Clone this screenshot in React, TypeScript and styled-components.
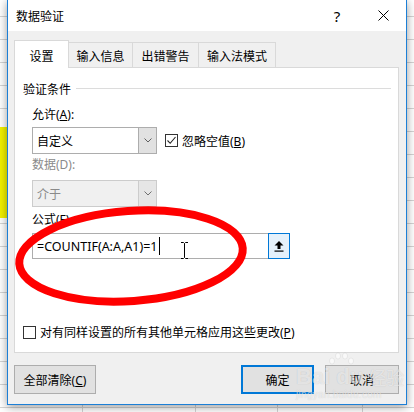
import React from "react";
import styled, { createGlobalStyle } from "styled-components";

const GlobalStyle = createGlobalStyle`
  html, body {
    margin: 0;
    padding: 0;
    background: #fff;
  }
  body {
    font-family: "Segoe UI", "Noto Sans", "Noto Sans CJK SC", sans-serif;
    font-size: 12px;
    color: #000;
  }
`;

// spreadsheet behind the dialog
const Sheet = styled.div`
  position: relative;
  width: 414px;
  height: 412px;
  overflow: hidden;
  background:
    linear-gradient(#f2f200, #f2f200) 0 127px / 7px 91px no-repeat,
    linear-gradient(#d4d4d4, #d4d4d4) 82px 0 / 1px 100% no-repeat,
    linear-gradient(#d4d4d4, #d4d4d4) 195px 0 / 1px 100% no-repeat,
    linear-gradient(#d4d4d4, #d4d4d4) 277px 0 / 1px 100% no-repeat,
    linear-gradient(#d4d4d4, #d4d4d4) 362px 0 / 1px 100% no-repeat,
    repeating-linear-gradient(180deg, transparent 0 16px, #d4d4d4 16px 17px, transparent 17px 23px),
    #fff;
`;

const Dialog = styled.div`
  box-sizing: border-box;
  margin-left: 7px;
  width: 400px;
  height: 405px;
  border: 1px solid #1c7fd6;
  border-top: none;
  background: #f0f0f0;
  box-shadow: 0 2px 9px rgba(0, 0, 0, 0.4);
  display: flex;
  flex-direction: column;
`;

const TitleBar = styled.div`
  height: 31px;
  background: #fff;
  display: flex;
  align-items: center;
  padding-left: 8px;
`;

const Title = styled.span`
  flex: 1;
  font-family: "Noto Sans CJK SC", sans-serif;
  font-size: 12px;
`;

const TitleButton = styled.div`
  width: 46px;
  height: 31px;
  display: flex;
  align-items: center;
  justify-content: center;
  font-size: 15px;
  font-family: "Noto Sans", sans-serif;
`;

const Body = styled.div`
  flex: 1;
  padding: 9px 7px 0 6px;
  display: flex;
  flex-direction: column;
`;

const TabRow = styled.div`
  display: flex;
  align-items: flex-end;
  height: 27px;
`;

const Tab = styled.div<{ $active?: boolean; $w: number }>`
  box-sizing: border-box;
  width: ${(p) => p.$w}px;
  height: ${(p) => (p.$active ? 28 : 25)}px;
  margin-bottom: ${(p) => (p.$active ? -1 : 0)}px;
  position: relative;
  z-index: ${(p) => (p.$active ? 1 : 0)};
  background: ${(p) => (p.$active ? "#fff" : "#f0f0f0")};
  border: 1px solid #d9d9d9;
  border-bottom: none;
  border-left: ${(p) => (p.$active ? "1px solid #d9d9d9" : "none")};
  display: flex;
  align-items: center;
  justify-content: center;
  padding-top: ${(p) => (p.$active ? 2 : 0)}px;
  font-family: "Noto Sans CJK SC", sans-serif;
`;

const Panel = styled.div`
  box-sizing: border-box;
  width: 385px;
  height: 286px;
  background: #fff;
  border: 1px solid #d9d9d9;
  padding: 12px 7px 0 8px;
  display: flex;
  flex-direction: column;
`;

const GroupHead = styled.div`
  display: flex;
  align-items: center;
  gap: 5px;
  height: 16px;
  font-family: "Noto Sans CJK SC", sans-serif;
  &::after {
    content: "";
    flex: 1;
    height: 1px;
    background: #dcdcdc;
  }
`;

const Fields = styled.div`
  margin-left: 9px;
  display: flex;
  flex-direction: column;
`;

const Label = styled.div<{ $top: number; $disabled?: boolean }>`
  margin-top: ${(p) => p.$top}px;
  height: 16px;
  line-height: 16px;
  color: ${(p) => (p.$disabled ? "#8a8a8a" : "#000")};
  font-family: "Noto Sans", "Noto Sans CJK SC", sans-serif;
`;

const Row = styled.div<{ $top: number }>`
  margin-top: ${(p) => p.$top}px;
  display: flex;
  align-items: center;
  gap: 8px;
`;

const Select = styled.div<{ $disabled?: boolean }>`
  box-sizing: border-box;
  width: 125px;
  height: 27px;
  display: flex;
  border: 1px solid ${(p) => (p.$disabled ? "#cccccc" : "#adadad")};
  background: ${(p) => (p.$disabled ? "#f0f0f0" : "#fff")};
  color: ${(p) => (p.$disabled ? "#8a8a8a" : "#000")};
`;

const SelectText = styled.div`
  flex: 1;
  display: flex;
  align-items: center;
  padding-left: 4px;
  font-family: "Noto Sans CJK SC", sans-serif;
`;

const SelectArrow = styled.div<{ $disabled?: boolean }>`
  width: 17px;
  background: ${(p) => (p.$disabled ? "#e6e6e6" : "#e1e1e1")};
  border-left: 1px solid ${(p) => (p.$disabled ? "#cccccc" : "#adadad")};
  display: flex;
  align-items: center;
  justify-content: center;
`;

const Check = styled.label`
  display: flex;
  align-items: center;
  gap: 4px;
  font-family: "Noto Sans", "Noto Sans CJK SC", sans-serif;
`;

const Box = styled.span`
  box-sizing: border-box;
  width: 13px;
  height: 13px;
  border: 1px solid #333;
  background: #fff;
  display: flex;
  align-items: center;
  justify-content: center;
`;

const Formula = styled.div`
  box-sizing: border-box;
  margin-top: 5px;
  width: 258px;
  height: 26px;
  border: 1px solid #adadad;
  background: #fff;
  display: flex;
  position: relative;
`;

const FormulaText = styled.div`
  flex: 1;
  display: flex;
  align-items: center;
  padding-left: 4px;
  font-family: "Noto Sans", sans-serif;
  font-size: 12.5px;
  &::after {
    content: "";
    width: 1px;
    height: 18px;
    margin-left: 1px;
    background: #000;
  }
`;

const RefButton = styled.div`
  box-sizing: border-box;
  width: 22px;
  margin: -1px -1px -1px 0;
  border: 1px solid #0078d7;
  background: #e5f1fb;
  display: flex;
  align-items: center;
  justify-content: center;
`;

const IBeam = styled.svg`
  position: absolute;
  left: 147px;
  top: 8px;
`;

const BottomCheck = styled(Check)`
  margin-top: 65px;
  height: 16px;
`;

const Buttons = styled.div`
  margin-top: 12px;
  display: flex;
  gap: 11px;
`;

const Button = styled.div<{ $w: number; $default?: boolean }>`
  box-sizing: border-box;
  width: ${(p) => p.$w}px;
  height: 29px;
  background: #e1e1e1;
  border: ${(p) => (p.$default ? "2px solid #0078d7" : "1px solid #adadad")};
  display: flex;
  align-items: center;
  justify-content: center;
  font-family: "Noto Sans", "Noto Sans CJK SC", sans-serif;
  &:first-child {
    margin-right: auto;
  }
`;

const Mark = styled.svg`
  position: absolute;
  left: 0;
  top: 0;
  pointer-events: none;
`;

const Watermark = styled.div`
  position: absolute;
  left: 296px;
  top: 352px;
  color: rgba(255, 255, 255, 0.6);
  text-shadow: 0 0 1px rgba(0, 0, 0, 0.18);
  pointer-events: none;
  display: flex;
  flex-direction: column;
  align-items: flex-start;
`;

const WmLogo = styled.div`
  display: flex;
  align-items: flex-end;
  gap: 3px;
  margin-top: 14px;
  font-family: "Liberation Sans", sans-serif;
  font-weight: bold;
  font-size: 22px;
  line-height: 22px;
`;

const WmCn = styled.span`
  font-family: "Noto Sans CJK SC", sans-serif;
  font-size: 18px;
  font-weight: normal;
  margin-left: 2px;
`;

const WmUrl = styled.div`
  font-family: "Liberation Sans", sans-serif;
  font-size: 10px;
  margin-top: 1px;
  letter-spacing: 0.3px;
`;

const Chevron = ({ color }: { color: string }) => (
  <svg width="8" height="5" viewBox="0 0 8 5">
    <path d="M0.5 0.5 L4 4 L7.5 0.5" fill="none" stroke={color} strokeWidth="1" />
  </svg>
);

const App = () => (
  <Sheet>
    <GlobalStyle />
    <Dialog>
      <TitleBar>
        <Title>数据验证</Title>
        <TitleButton>?</TitleButton>
        <TitleButton>
          <svg width="11" height="11" viewBox="0 0 11 11">
            <path d="M0.5 0.5 L10.5 10.5 M10.5 0.5 L0.5 10.5" stroke="#000" strokeWidth="1" />
          </svg>
        </TitleButton>
      </TitleBar>
      <Body>
        <TabRow>
          <Tab $active $w={55}>设置</Tab>
          <Tab $w={64}>输入信息</Tab>
          <Tab $w={66}>出错警告</Tab>
          <Tab $w={77}>输入法模式</Tab>
        </TabRow>
        <Panel>
          <GroupHead>验证条件</GroupHead>
          <Fields>
            <Label $top={11}>
              允许(<u>A</u>):
            </Label>
            <Row $top={4}>
              <Select>
                <SelectText>自定义</SelectText>
                <SelectArrow>
                  <Chevron color="#606060" />
                </SelectArrow>
              </Select>
              <Check>
                <Box>
                  <svg width="11" height="11" viewBox="0 0 11 11">
                    <path d="M1.5 5.5 L4.2 8.3 L9.5 2" fill="none" stroke="#222" strokeWidth="1.1" />
                  </svg>
                </Box>
                <span>
                  忽略空值(<u>B</u>)
                </span>
              </Check>
            </Row>
            <Label $top={3} $disabled>
              数据(D):
            </Label>
            <Row $top={7}>
              <Select $disabled>
                <SelectText>介于</SelectText>
                <SelectArrow $disabled>
                  <Chevron color="#707070" />
                </SelectArrow>
              </Select>
            </Row>
            <Label $top={5}>
              公式(<u>F</u>)
            </Label>
            <Formula>
              <FormulaText>=COUNTIF(A:A,A1)=1</FormulaText>
              <IBeam width="9" height="17" viewBox="0 0 9 17">
                <path
                  d="M1 0.5 H3.5 L4.5 1.5 L5.5 0.5 H8 M4.5 1.5 V15.5 M1 16.5 H3.5 L4.5 15.5 L5.5 16.5 H8"
                  fill="none"
                  stroke="#fff"
                  strokeWidth="2.6"
                />
                <path
                  d="M1 0.5 H3.5 L4.5 1.5 L5.5 0.5 H8 M4.5 1.5 V15.5 M1 16.5 H3.5 L4.5 15.5 L5.5 16.5 H8"
                  fill="none"
                  stroke="#000"
                  strokeWidth="1"
                />
              </IBeam>
              <RefButton>
                <svg width="10" height="11" viewBox="0 0 10 11">
                  <path d="M5 0 L9.5 4.5 L6.5 4.5 L6.5 8 L3.5 8 L3.5 4.5 L0.5 4.5 Z" fill="#000" />
                  <rect x="0.5" y="9.5" width="9" height="1.2" fill="#000" />
                </svg>
              </RefButton>
            </Formula>
          </Fields>
          <BottomCheck>
            <Box />
            <span>
              对有同样设置的所有其他单元格应用这些更改(<u>P</u>)
            </span>
          </BottomCheck>
        </Panel>
        <Buttons>
          <Button $w={82}>
            <span>
              全部清除(<u>C</u>)
            </span>
          </Button>
          <Button $w={73} $default>
            确定
          </Button>
          <Button $w={74}>取消</Button>
        </Buttons>
      </Body>
    </Dialog>
    <Mark width="414" height="412" viewBox="0 0 414 412">
      <ellipse
        cx="131"
        cy="256"
        rx="112"
        ry="45"
        transform="rotate(-4 131 256)"
        fill="none"
        stroke="#ff0000"
        strokeWidth="8"
      />
    </Mark>
    <Watermark>
      <svg width="60" height="14" viewBox="0 0 60 14" style={{ marginLeft: 30, marginBottom: -14 }}>
        <g fill="rgba(255,255,255,0.6)" stroke="rgba(0,0,0,0.1)" strokeWidth="0.6">
          <ellipse cx="6" cy="9" rx="2.5" ry="3" />
          <ellipse cx="12" cy="4" rx="2.5" ry="3" />
          <ellipse cx="19" cy="4" rx="2.5" ry="3" />
          <ellipse cx="25" cy="9" rx="2.5" ry="3" />
        </g>
      </svg>
      <WmLogo>
        Bai du
        <WmCn>经验</WmCn>
      </WmLogo>
      <WmUrl>jingyan.baidu.com</WmUrl>
    </Watermark>
  </Sheet>
);

export default App;
